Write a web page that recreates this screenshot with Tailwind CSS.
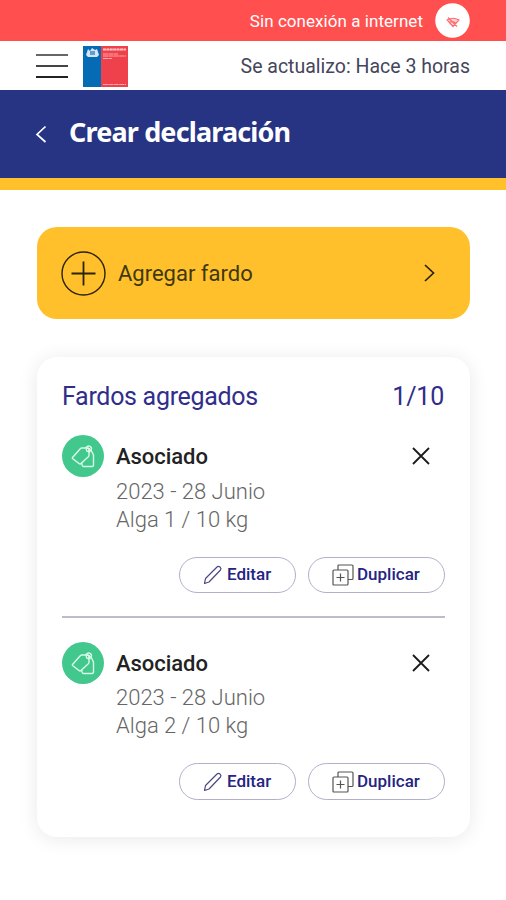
<!DOCTYPE html>
<html lang="es">
<head>
<meta charset="utf-8">
<title>Crear declaración</title>
<script src="https://cdn.jsdelivr.net/npm/@tailwindcss/browser@4"></script>
</head>
<body class="w-[506px] h-[900px] overflow-hidden bg-white font-[Roboto,sans-serif] whitespace-nowrap">
<svg class="hidden">
  <symbol id="tag" viewBox="0 0 42 42"><g fill="none" stroke="#d9fbe9" stroke-width="1.400" stroke-linejoin="round" stroke-linecap="round"><path d="M10.500 22.500L18.500 13.500Q19 13 20 13L25 13Q27 13 27 15V20Q27 21 26.300 21.700L19 28.500Q18 29.500 17 28.500L10.500 23.500Q10 23 10.500 22.500Z"/><path d="M29 15L31.500 20V30Q31.500 31.500 30 31.500H21.500Q20.200 31.500 20 30L19.800 28"/><circle cx="26" cy="14.800" r="1.700"/><path d="M24 12.500Q26 10 28.500 11.500Q30.500 13.500 28.500 16L27 17"/></g></symbol>
  <symbol id="pencil" viewBox="0 0 20 20"><path d="M1.500 18.500L2.500 13.500L14 2Q15.500.800 17 2Q18.700 3.500 17.500 5L6 17Z" fill="none" stroke="#4a4784" stroke-width="1.200" stroke-linejoin="round"/></symbol>
  <symbol id="copy" viewBox="0 0 22 22"><path d="M6 6V2Q6 1 7 1H20Q21 1 21 2V14.500Q21 15.500 20 15.500H16M2 6H15Q16 6 16 7V20Q16 21 15 21H2Q1 21 1 20V7Q1 6 2 6ZM8.500 9.500V17.500M4.500 13.500H12.500" fill="none" stroke="#555" stroke-width="1.200"/></symbol>
  <symbol id="cross" viewBox="0 0 18 18"><path d="M1 1L17 17M17 1L1 17" stroke="#1b1b1b" stroke-width="1.800" fill="none"/></symbol>
</svg>
<div class="h-[41px] bg-[#ff4f4f] flex items-center justify-end gap-3 pr-[36px] text-white">
  <span class="text-[17px] leading-5 tracking-[0.05px]">Sin conexión a internet</span>
  <svg class="w-[35px] h-[35px]" viewBox="0 0 35 35"><circle cx="17.500" cy="17.500" r="17.300" fill="#fff"/><g fill="none" stroke="#ff6e72" stroke-width="1.200"><path d="M12 17Q18 13.500 24 17L18 23.500ZM14.500 19.500Q18 17.500 21 20.500M13 14.500L22 23.500"/></g><path d="M12 17L18 23.500L24 17Q18 13.500 12 17" fill="#ff6e72" opacity=".3"/></svg>
</div>
<header class="h-[49px] flex items-center pl-[36px] pr-[36px]">
  <div class="flex flex-col gap-[9px] w-8 mr-[15px]"><i class="block h-[2px] bg-[#666]"></i><i class="block h-[2px] bg-[#444]"></i><i class="block h-[2px] bg-[#222]"></i></div>
  <svg class="w-[45px] h-[41px] mt-px" viewBox="0 0 45 41"><path fill="#056bb5" d="M0 0H18V41H0Z"/><path fill="#ee414c" d="M18 0H45V41H18Z"/><path d="M3 9L5 3L7 5L9 2L12 4L14 3L16 9L14 11H5Z" fill="#d3e6f5"/><path d="M7 5H12V9H7Z" fill="#629dcc"/><path d="M20 3.500H43" stroke="#ffc4c6" stroke-width="1.800" stroke-dasharray="3 .4"/><path d="M20 8H35M20 10H43M20 12.500H29M20 38.500H43" stroke="#ffa4a9" stroke-width="1" stroke-dasharray="5 .4"/></svg>
  <span class="ml-auto text-[19.500px] text-[#45455c] leading-6 pt-[3px]">Se actualizo: Hace 3 horas</span>
</header>
<div class="h-[100px] bg-[#273484] border-b-[12px] border-[#ffc02b] flex items-center pl-[35px]">
  <svg class="w-[12px] h-[18px]" viewBox="0 0 12 18"><path d="M10.500 1.500L2 9.500L10.500 17" fill="none" stroke="#fff" stroke-width="1.700"/></svg>
  <h1 class="ml-[22px] font-['Noto_Sans',sans-serif] font-bold text-[27px] leading-8 text-white tracking-[-0.850px] -mt-1">Crear declaración</h1>
</div>
<main class="px-[37px] pt-[37px]">
  <button class="w-[433px] h-[92px] rounded-[20px] bg-[#ffc02b] flex items-center pl-6 pr-[35px] text-[#40380f]">
    <svg class="w-[45px] h-[45px]" viewBox="0 0 45 45"><g fill="none" stroke="#2a240d" stroke-width="1.400"><circle cx="22.500" cy="22.500" r="21.500"/><path stroke-width="1.800" d="M22.500 10.500V34.500M10.500 22.500H34.500"/></g></svg>
    <span class="ml-3 text-[22px]">Agregar fardo</span>
    <svg class="ml-auto w-[11px] h-[18px]" viewBox="0 0 11 18"><path d="M1 1L9.500 9L1 17" fill="none" stroke="#2a240d" stroke-width="1.700"/></svg>
  </button>
  <section class="mt-[38px] w-[433px] h-[480px] rounded-[20px] bg-white shadow-[0_2px_20px_rgba(0,0,0,0.09)] px-[25px] pt-[25px]">
    <div class="flex justify-between h-[28px] items-center text-[25px] leading-7 text-[#302e8a] pt-0.5 pr-px"><h2 class="tracking-[-0.300px]">Fardos agregados</h2><span class="tracking-[-0.200px]">1/10</span></div>
    <article class="h-[208px] pt-[26px] border-b-2 border-[#bcbccd]">
      <div class="flex">
        <svg class="w-[42px] h-[42px] -mt-px rounded-full bg-[#42c78d]"><use href="#tag"/></svg>
        <div class="ml-3 text-[22px] leading-7 text-[#666] font-light">
          <h3 class="h-[42px] leading-[42px] font-medium text-[#222] tracking-[-0.050px]">Asociado</h3>
          <p>2023 - 28 Junio</p>
          <p>Alga 1 / 10 kg</p>
        </div>
        <svg class="ml-auto mt-[11px] mr-[15px] w-[18px] h-[18px]"><use href="#cross"/></svg>
      </div>
      <div class="flex justify-end gap-3 mt-[23px] text-[17px] font-medium text-[#252383]">
        <button class="w-[117px] h-[36px] rounded-full border-[1.500px] border-[#b0b0cc] flex items-center pl-[23px] gap-1"><svg class="w-5 h-5"><use href="#pencil"/></svg><span>Editar</span></button>
        <button class="w-[137px] h-[36px] rounded-full border-[1.500px] border-[#b0b0cc] flex items-center pl-[23px] gap-[3px]"><svg class="w-[22px] h-[22px]"><use href="#copy"/></svg><span>Duplicar</span></button>
      </div>
    </article>
    <article class="pt-[25px]">
      <div class="flex">
        <svg class="w-[42px] h-[42px] -mt-px rounded-full bg-[#42c78d]"><use href="#tag"/></svg>
        <div class="ml-3 text-[22px] leading-7 text-[#666] font-light">
          <h3 class="h-[41px] leading-[42px] font-medium text-[#222] tracking-[-0.050px]">Asociado</h3>
          <p>2023 - 28 Junio</p>
          <p>Alga 2 / 10 kg</p>
        </div>
        <svg class="ml-auto mt-[11px] mr-[15px] w-[18px] h-[18px]"><use href="#cross"/></svg>
      </div>
      <div class="flex justify-end gap-3 mt-[23px] text-[17px] font-medium text-[#252383]">
        <button class="w-[117px] h-[37px] rounded-full border-[1.500px] border-[#b0b0cc] flex items-center pl-[23px] gap-1"><svg class="w-5 h-5"><use href="#pencil"/></svg><span>Editar</span></button>
        <button class="w-[137px] h-[37px] rounded-full border-[1.500px] border-[#b0b0cc] flex items-center pl-[23px] gap-[3px]"><svg class="w-[22px] h-[22px]"><use href="#copy"/></svg><span>Duplicar</span></button>
      </div>
    </article>
  </section>
</main>
</body>
</html>
